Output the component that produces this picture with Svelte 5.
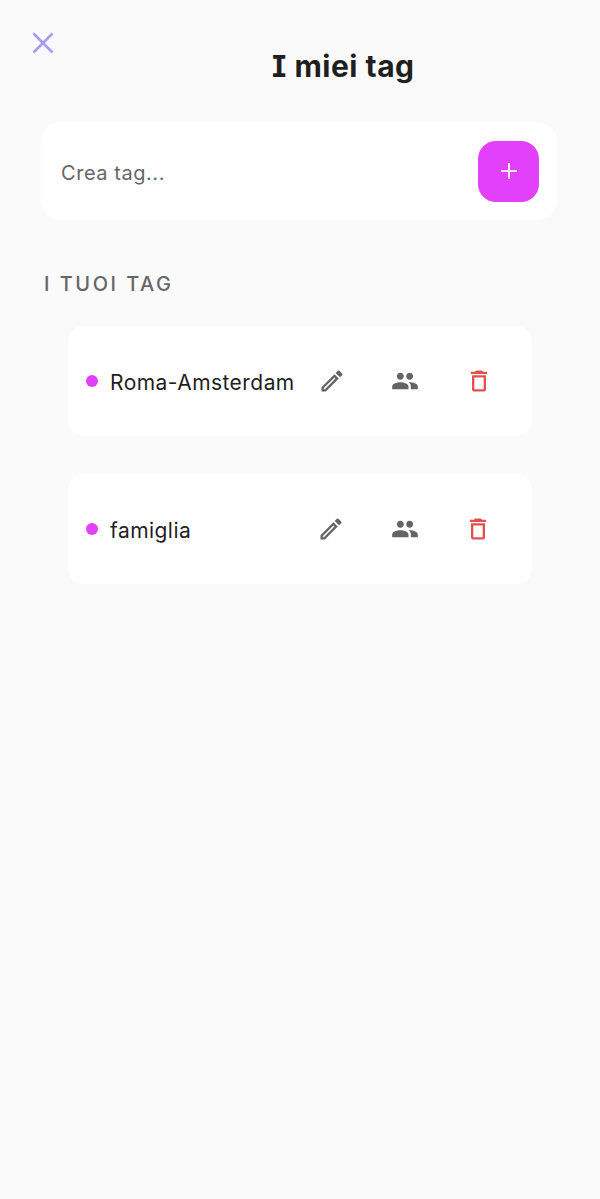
<script>
	let tags = ['Roma-Amsterdam', 'famiglia'];
</script>

<div class="page">
	<button class="close" aria-label="Chiudi">
		<svg width="24" height="24" viewBox="0 0 24 24">
			<path d="M2.5 2.5l19 19M21.5 2.5l-19 19" fill="none" stroke="#a99bf0" stroke-width="2.6" />
		</svg>
	</button>

	<h1>I miei tag</h1>

	<div class="create">
		<span class="placeholder">Crea tag...</span>
		<button class="add" aria-label="Aggiungi">
			<svg width="18" height="18" viewBox="0 0 18 18">
				<path d="M9 1v16M1 9h16" fill="none" stroke="#fbe6ff" stroke-width="2" />
			</svg>
		</button>
	</div>

	<h2>I TUOI TAG</h2>

	<ul>
		{#each tags as tag}
			<li>
				<span class="dot"></span>
				<span class="name">{tag}</span>
				<div class="icons">
					<svg width="28" height="28" viewBox="0 0 24 24" fill="#646464">
						<path d="M3 17.25V21h3.75L17.81 9.94l-3.75-3.75L3 17.25zM5.92 19H5v-.92l9.06-9.06.92.92L5.92 19zM20.71 7.04a1 1 0 0 0 0-1.41l-2.34-2.34a1 1 0 0 0-1.41 0l-1.83 1.83 3.75 3.75 1.83-1.83z" />
					</svg>
					<svg width="28" height="28" viewBox="0 0 24 24" fill="#646464">
						<path d="M16 11c1.66 0 2.99-1.34 2.99-3S17.66 5 16 5s-3 1.34-3 3 1.34 3 3 3zm-8 0c1.66 0 2.99-1.34 2.99-3S9.66 5 8 5 5 6.34 5 8s1.34 3 3 3zm0 2c-2.33 0-7 1.17-7 3.5V19h14v-2.5C15 14.17 10.33 13 8 13zm8 0c-.29 0-.62.02-.97.05 1.16.84 1.97 1.97 1.97 3.45V19h6v-2.5c0-2.33-4.67-3.5-7-3.5z" />
					</svg>
					<svg width="28" height="28" viewBox="0 0 24 24" fill="#e0524f">
						<path d="M6 19c0 1.1.9 2 2 2h8c1.1 0 2-.9 2-2V7H6v12zM8 9h8v10H8V9zm7.5-5l-1-1h-5l-1 1H5v2h14V4h-3.5z" />
					</svg>
				</div>
			</li>
		{/each}
	</ul>
</div>

<style>
	:global(body) {
		margin: 0;
		background: #fafafa;
	}

	.page {
		box-sizing: border-box;
		min-height: 1199px;
		padding: 31px 41px 0 41px;
		background: #fafafa;
		font-family: Inter, sans-serif;
		position: relative;
	}

	button {
		border: 0;
		padding: 0;
		display: flex;
		align-items: center;
		justify-content: center;
	}

	.close {
		position: absolute;
		left: 31px;
		top: 31px;
		width: 24px;
		height: 24px;
		background: none;
	}

	h1 {
		margin: 0;
		padding: 16px 0 0 231px;
		font-feature-settings: 'cv08' 1;
		font-size: 30px;
		line-height: 38px;
		letter-spacing: 0.5px;
		font-weight: 700;
		color: #1f1f1f;
		height: 91px;
		box-sizing: border-box;
	}

	.create {
		width: 516px;
		height: 98px;
		background: #fff;
		border-radius: 20px;
		box-sizing: border-box;
		padding: 0 18px 0 20px;
		display: flex;
		align-items: center;
		justify-content: space-between;
	}

	.placeholder {
		padding-top: 4px;
		font-size: 20px;
		letter-spacing: 0.55px;
		color: #666;
	}

	.add {
		width: 61px;
		height: 61px;
		border-radius: 18px;
		background: #e340fb;
	}

	h2 {
		margin: 52px 0 0 3px;
		font-size: 20px;
		line-height: 24px;
		font-weight: 500;
		letter-spacing: 2.5px;
		color: #666;
	}

	ul {
		list-style: none;
		margin: 30px 0 0 27px;
		padding: 0;
		width: 464px;
		display: flex;
		flex-direction: column;
		gap: 38px;
	}

	li {
		height: 110px;
		background: #fff;
		border-radius: 16px;
		box-sizing: border-box;
		padding-left: 18px;
		display: flex;
		align-items: center;
	}

	.dot {
		width: 12px;
		height: 12px;
		border-radius: 50%;
		background: #e340fb;
		margin-right: 12px;
		flex: none;
	}

	.name {
		min-width: 184px;
		padding-top: 2px;
		font-size: 21px;
		letter-spacing: 0.45px;
		color: #1f1f1f;
		white-space: nowrap;
	}

	.icons {
		margin-left: 23px;
		display: flex;
		gap: 45.5px;
		height: 28px;
	}
</style>
